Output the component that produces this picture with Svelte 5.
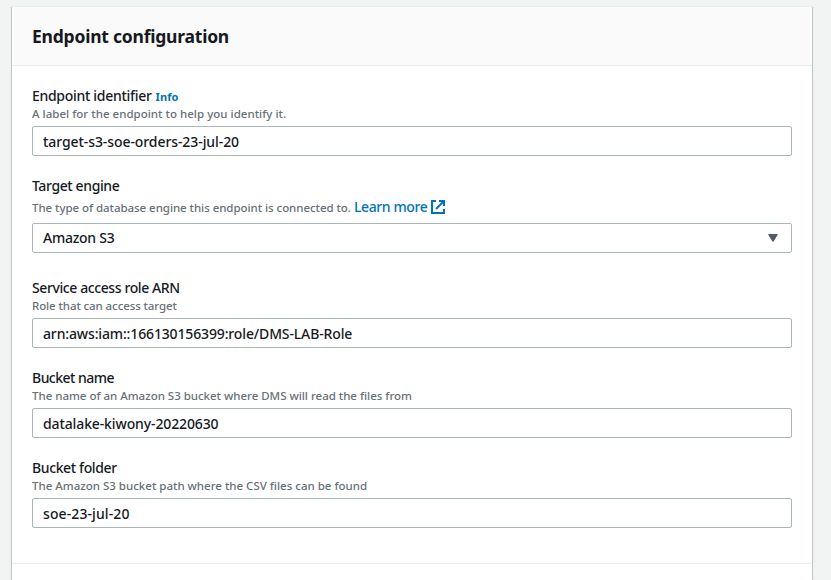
<script>
  const fields = [
    { label: 'Endpoint identifier', ls: -0.3, info: true, hint: 'A label for the endpoint to help you identify it.', hs: 0.02, value: 'target-s3-soe-orders-23-jul-20', vs: -0.08 },
    { label: 'Target engine', ls: -0.38, link: true, hint: 'The type of database engine this endpoint is connected to.', hs: -0.05, value: 'Amazon S3', vs: -0.26, select: true },
    { label: 'Service access role ARN', ls: -0.4, hint: 'Role that can access target', hs: -0.1, value: 'arn:aws:iam::166130156399:role/DMS-LAB-Role', vs: -0.14 },
    { label: 'Bucket name', ls: -0.53, hint: 'The name of an Amazon S3 bucket where DMS will read the files from', hs: -0.015, value: 'datalake-kiwony-20220630', vs: -0.12 },
    { label: 'Bucket folder', ls: -0.38, hint: 'The Amazon S3 bucket path where the CSV files can be found', hs: 0, value: 'soe-23-jul-20', vs: 0.1 },
  ];
</script>

<main>
  <section class="panel">
    <header><h2>Endpoint configuration</h2></header>
    <div class="body">
      {#each fields as f}
        <div class="field" class:engine={f.select}>
          <div class="label">
            <span style:letter-spacing="{f.ls}px">{f.label}</span>
            {#if f.info}<span class="info">Info</span>{/if}
          </div>
          <div class="hint">
            <span style:letter-spacing="{f.hs}px">{f.hint}</span>
            {#if f.link}
              <span class="more">Learn more</span>
              <svg class="external" width="16" height="16" viewBox="0 0 16 16" fill="none" stroke="currentColor" stroke-width="2">
                <path d="M6 2H2v12h12v-4M9 2h5v5" /><path d="M6 10l7.5-7.5" />
              </svg>
            {/if}
          </div>
          <div class="control" class:input={!f.select}>
            <span style:letter-spacing="{f.vs}px">{f.value}</span>
            {#if f.select}
              <svg width="12" height="10" viewBox="0 0 12 10"><path d="M2 1.7h8L6 8z" fill="#545b64" stroke="#545b64" stroke-width="1.4" stroke-linejoin="round" /></svg>
            {/if}
          </div>
        </div>
      {/each}
    </div>
    <div class="next"></div>
  </section>
</main>

<style>
  :global(body) { margin: 0; background: #f2f3f3; }
  main {
    box-sizing: border-box;
    height: 580px;
    overflow: hidden;
    padding: 6px 19px 0 12px;
    font: 500 14px/20px 'Noto Sans', sans-serif;
    color: #16191f;
  }
  .panel {
    height: 620px;
    background: #fff;
    border-top: 1px solid #eaeded;
    box-sizing: border-box;
    box-shadow: 0 1px 1px rgba(0, 28, 36, 0.3), 1px 1px 1px rgba(0, 28, 36, 0.15), -1px 1px 1px rgba(0, 28, 36, 0.15);
  }
  header { height: 58px; padding: 0 20px; background: #fafafa; border-bottom: 1px solid #eaeded; display: flex; align-items: center; }
  h2 { margin: 0; font-size: 17.5px; line-height: 22px; letter-spacing: -0.22px; }
  .body { display: flex; flex-direction: column; gap: 20px; padding: 20px 20px 35px; }
  .label { display: flex; align-items: center; height: 20px; gap: 4px; }
  .info { font-size: 11px; font-weight: 700; letter-spacing: 0.1px; color: #0073bb; padding-top: 1px; }
  .hint { display: flex; align-items: center; height: 16px; margin-bottom: 4px; font-size: 11.5px; line-height: 16px; font-weight: 550; color: #687078; white-space: nowrap; }
  .engine .hint { height: 22px; margin-bottom: 5px; }
  .engine { margin-bottom: 5px; }
  .engine .hint > span:first-child { padding-top: 1px; }
  .more { font-size: 14px; font-weight: 500; letter-spacing: -0.4px; color: #0073bb; margin-left: 3px; }
  .external { color: #0073bb; margin-left: 3px; }
  .control { box-sizing: border-box; height: 30px; padding: 0 12px 0 10px; border: 1px solid #aab7b8; border-radius: 2px; display: flex; align-items: center; justify-content: space-between; }
  .input { padding-top: 2px; }
  .next { border-top: 1px solid #eaeded; }
</style>
